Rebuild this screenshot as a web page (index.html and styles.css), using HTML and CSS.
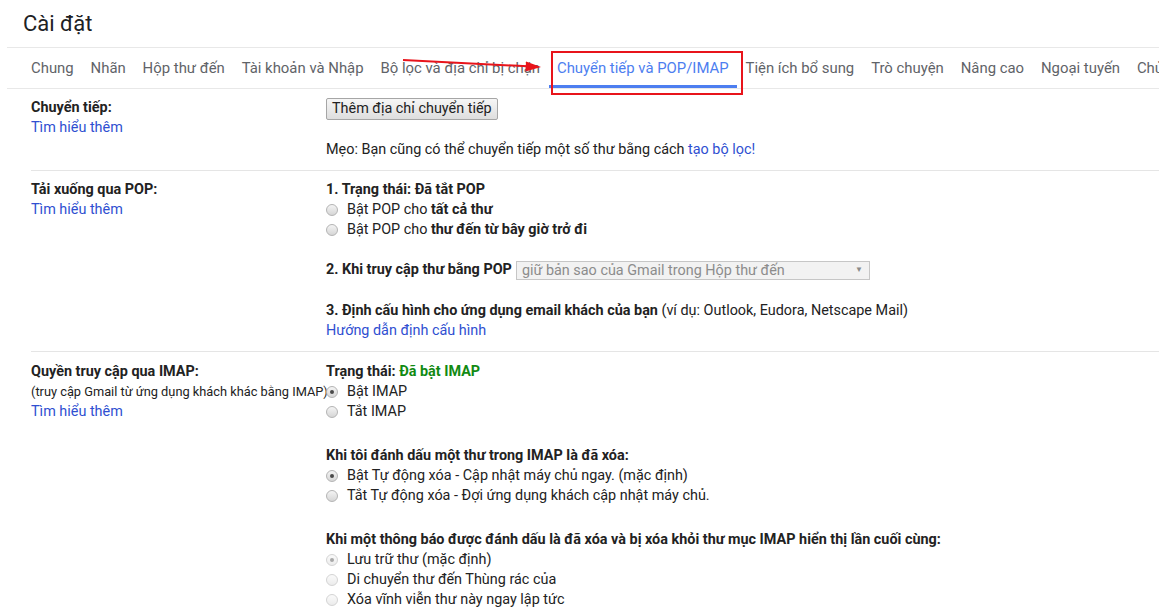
FILE: index.html
```html
<!DOCTYPE html>
<html lang="vi">
<head>
<meta charset="utf-8">
<title>Cài đặt</title>
<link rel="stylesheet" href="styles.css">
</head>
<body>
<div class="page">
  <div class="title">Cài đặt</div>
  <nav class="tabs">
    <span class="tab">Chung</span>
    <span class="tab">Nhãn</span>
    <span class="tab">Hộp thư đến</span>
    <span class="tab">Tài khoản và Nhập</span>
    <span class="tab">Bộ lọc và địa chỉ bị chặn</span>
    <span class="tab active">Chuyển tiếp và POP/IMAP</span>
    <span class="tab">Tiện ích bổ sung</span>
    <span class="tab">Trò chuyện</span>
    <span class="tab">Nâng cao</span>
    <span class="tab">Ngoại tuyến</span>
    <span class="tab">Chủ đề</span>
  </nav>
</div>

<section class="section">
  <div class="label">
    <div class="bold">Chuyển tiếp:</div>
    <a class="link">Tìm hiểu thêm</a>
  </div>
  <div class="content">
    <button class="btn">Thêm địa chỉ chuyển tiếp</button>
    <div class="tip">Mẹo: Bạn cũng có thể chuyển tiếp một số thư bằng cách <a class="link">tạo bộ lọc!</a></div>
  </div>
</section>

<section class="section">
  <div class="label">
    <div class="bold">Tải xuống qua POP:</div>
    <a class="link">Tìm hiểu thêm</a>
  </div>
  <div class="content">
    <div class="bold">1. Trạng thái: Đã tắt POP</div>
    <div class="opt"><span class="radio"></span>Bật POP cho&nbsp;<b>tất cả thư</b></div>
    <div class="opt"><span class="radio"></span>Bật POP cho&nbsp;<b>thư đến từ bây giờ trở đi</b></div>
    <div class="group select-row"><b>2. Khi truy cập thư bằng POP</b><span class="select"><span class="select-text">giữ bản sao của Gmail trong Hộp thư đến</span><span class="caret">▼</span></span></div>
    <div class="group"><b>3. Định cấu hình cho ứng dụng email khách của bạn</b> (ví dụ: Outlook, Eudora, Netscape Mail)</div>
    <a class="link">Hướng dẫn định cấu hình</a>
  </div>
</section>

<section class="section last">
  <div class="label">
    <div class="bold">Quyền truy cập qua IMAP:</div>
    <div class="small">(truy cập Gmail từ ứng dụng khách khác bằng IMAP)</div>
    <a class="link">Tìm hiểu thêm</a>
  </div>
  <div class="content">
    <div><b>Trạng thái:</b> <b class="green">Đã bật IMAP</b></div>
    <div class="opt"><span class="radio checked"></span>Bật IMAP</div>
    <div class="opt"><span class="radio"></span>Tắt IMAP</div>

    <div class="group2 bold">Khi tôi đánh dấu một thư trong IMAP là đã xóa:</div>
    <div class="opt"><span class="radio checked"></span>Bật Tự động xóa - Cập nhật máy chủ ngay. (mặc định)</div>
    <div class="opt"><span class="radio"></span>Tắt Tự động xóa - Đợi ứng dụng khách cập nhật máy chủ.</div>

    <div class="group2 bold">Khi một thông báo được đánh dấu là đã xóa và bị xóa khỏi thư mục IMAP hiển thị lần cuối cùng:</div>
    <div class="opt"><span class="radio checked disabled"></span>Lưu trữ thư (mặc định)</div>
    <div class="opt"><span class="radio disabled"></span>Di chuyển thư đến Thùng rác của</div>
    <div class="opt"><span class="radio disabled"></span>Xóa vĩnh viễn thư này ngay lập tức</div>
  </div>
</section>

<svg class="annot" width="1159" height="100" viewBox="0 0 1159 100">
  <rect x="552" y="52" width="190" height="42" fill="none" stroke="#e8141b" stroke-width="2"/>
  <line x1="403" y1="60" x2="528" y2="66.3" stroke="#e8141b" stroke-width="2"/>
  <polygon points="541,67 526,61.5 525.5,71.5" fill="#e8141b"/>
</svg>
</body>
</html>
```

FILE: styles.css
```css
html, body {
  margin: 0;
  padding: 0;
  background: #ffffff;
}

body {
  font-family: Roboto, "Liberation Sans", Arial, sans-serif;
  font-size: 14.4px;
  color: #222222;
  width: 1159px;
  overflow: hidden;
}

.page {
  margin-left: 7px;
}

.title {
  padding-left: 16px;
  height: 47px;
  line-height: 48px;
  font-size: 22px;
  color: #202124;
  border-bottom: 1px solid #e8e8e8;
}

.tabs {
  display: flex;
  height: 40px;
  padding-left: 16px;
  border-bottom: 1px solid #e8e8e8;
  white-space: nowrap;
  overflow: hidden;
}

.tab {
  padding: 0 8.7px 0 8px;
  margin-right: 0.2px;
  line-height: 40px;
  font-size: 14.9px;
  color: #5f6368;
  flex: none;
}

.tab.active {
  color: #4d7ef0;
  box-shadow: inset 0 -3px 0 #4d7ef0;
}

.section {
  display: grid;
  grid-template-columns: 295px 1fr;
  margin-left: 31px;
  padding: 9px 0 10px;
  border-bottom: 1px solid #e5e5e5;
  line-height: 20px;
}

.section.last {
  border-bottom: none;
  padding-top: 10px;
}

.bold, b {
  font-weight: 700;
}

.link {
  color: #2f4fd1;
  text-decoration: none;
  display: inline-block;
}

.label .link {
  display: block;
}

.small {
  font-size: 12.8px;
  white-space: nowrap;
}

.content {
  display: flex;
  flex-direction: column;
  align-items: flex-start;
}

.btn {
  margin-top: 0;
  height: 22px;
  padding: 0 5px;
  font-family: Roboto, "Liberation Sans", Arial, sans-serif;
  font-size: 14.4px;
  color: #222;
  background: linear-gradient(#f6f6f6, #dedede);
  border: 1px solid #a6a6a6;
  border-radius: 2px;
  line-height: 20px;
}

.tip {
  margin-top: 20px;
}

.opt {
  display: flex;
  align-items: center;
  white-space: nowrap;
}

.radio {
  width: 12px;
  height: 12px;
  box-sizing: border-box;
  border-radius: 50%;
  border: 1px solid #b4b4b4;
  background: linear-gradient(#f4f4f4, #d6d6d6);
  margin-right: 9px;
  flex: none;
  display: flex;
  align-items: center;
  justify-content: center;
}

.radio.checked::after {
  content: "";
  width: 4px;
  height: 4px;
  border-radius: 50%;
  background: #4a4a4a;
}

.radio.disabled {
  border-color: #d4d4d4;
  background: linear-gradient(#fafafa, #ececec);
}

.radio.checked.disabled::after {
  background: #a8a8a8;
}

.group {
  margin-top: 20px;
}

.group + .group {
  margin-top: 21px;
}

.group2 {
  margin-top: 24px;
}

.select-row {
  display: flex;
  align-items: center;
  height: 20px;
}

.select {
  margin-left: 4px;
  width: 354px;
  height: 19px;
  box-sizing: border-box;
  border: 1px solid #c6c6c6;
  background: #f2f2f2;
  display: flex;
  align-items: center;
  justify-content: space-between;
  padding: 0 6px 0 5px;
  color: #8c8c8c;
  font-size: 14.4px;
}

.select-text {
  line-height: 17px;
}

.caret {
  font-size: 8px;
  color: #8a8a8a;
}

.green {
  color: #128a12;
}

.annot {
  position: absolute;
  left: 0;
  top: 0;
  pointer-events: none;
}
```
